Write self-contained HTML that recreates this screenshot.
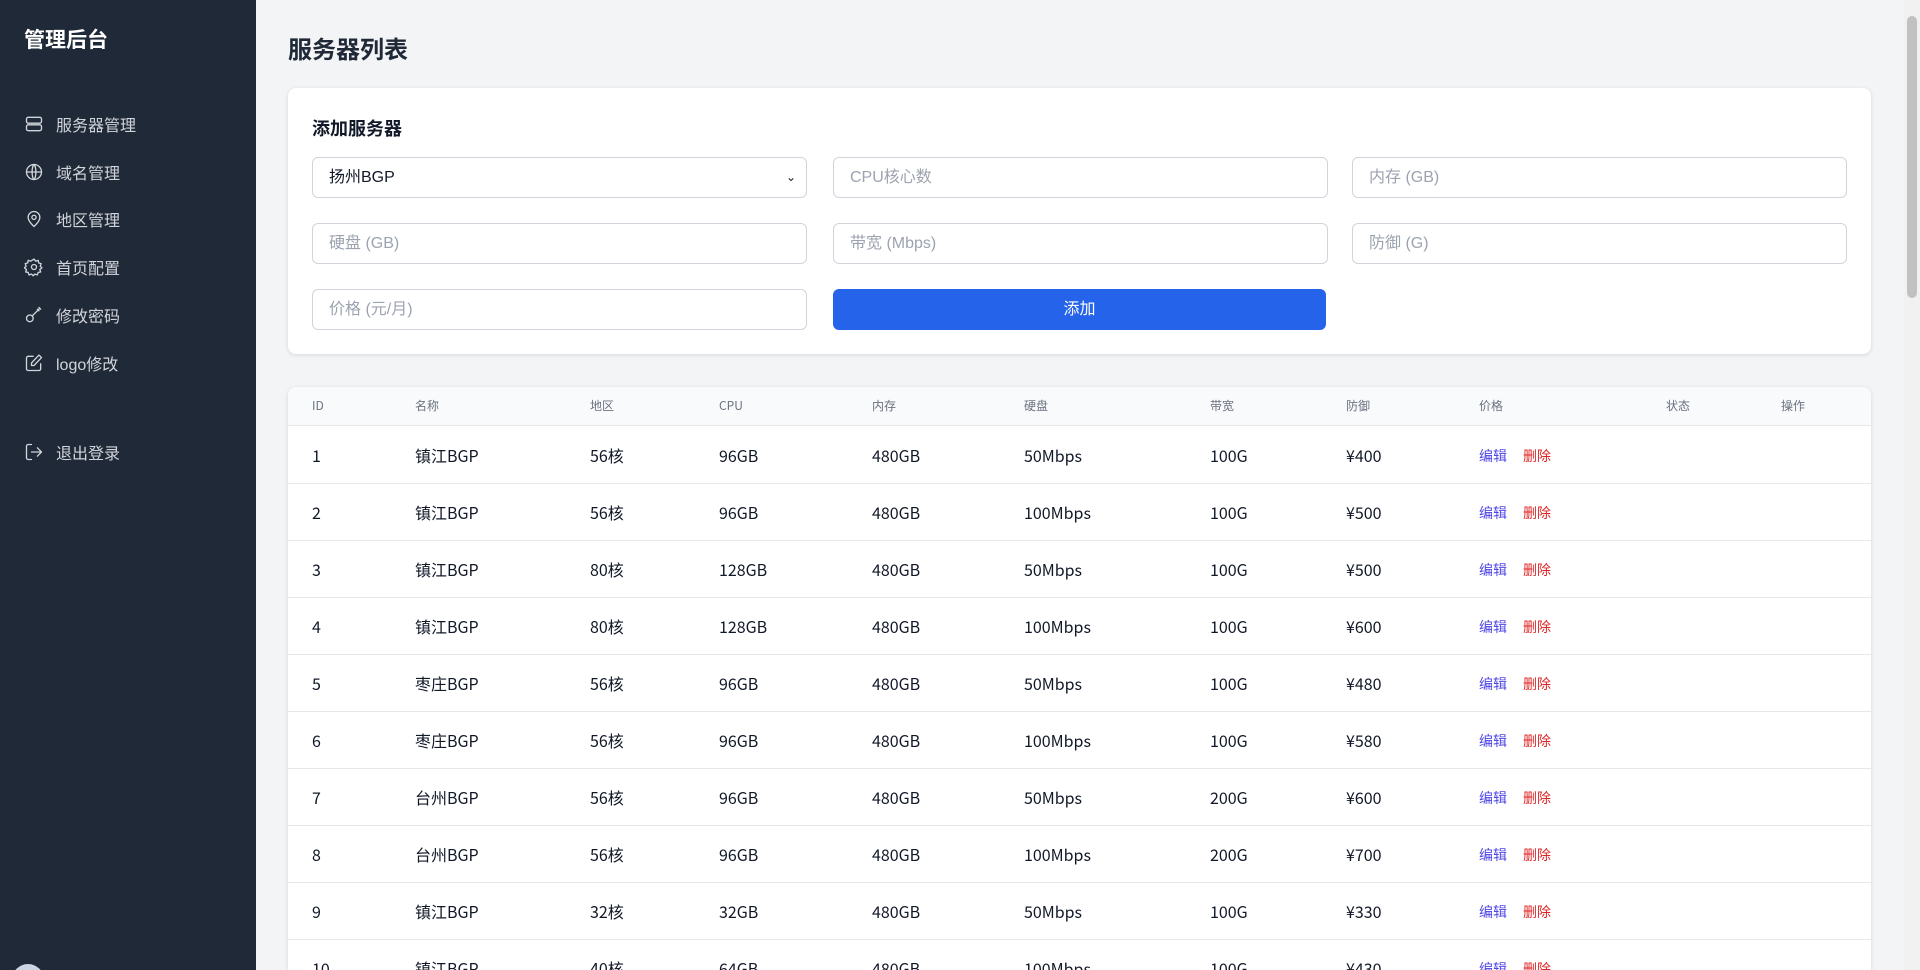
<!DOCTYPE html>
<html><head><meta charset="utf-8"><style>
*{box-sizing:border-box;margin:0;padding:0}
html,body{width:1920px;height:970px;overflow:hidden}
body{background:#f3f4f6;font-family:"Liberation Sans","Noto Sans CJK SC",sans-serif;color:#111827;position:relative}
.sb{position:absolute;left:0;top:0;width:256px;height:970px;background:#1f2937;color:#e5e7eb;overflow:hidden}
.sb h1{position:absolute;left:24px;top:24px;font-size:21px;color:#fff;font-weight:bold}
.nav{position:absolute;left:24px;height:24px;display:flex;align-items:center;font-size:16px;color:#d1d5db}
.nav svg{width:20px;height:20px;margin-right:12px;stroke:#d1d5db;fill:none;stroke-width:1.6;stroke-linecap:round;stroke-linejoin:round}
.main h2{position:absolute;left:288px;top:30px;font-size:24px;font-weight:bold;color:#1f2937}
.card{position:absolute;left:288px;width:1583px;background:#fff;border-radius:8px;box-shadow:0 1px 4px rgba(0,0,0,.12)}
.card h3{position:absolute;left:24px;top:27px;font-size:18px;font-weight:bold}
.in{position:absolute;width:495px;height:41px;border:1px solid #d1d5db;border-radius:6px;font-size:16px;color:#9ca3af;padding:0 16px;line-height:39px;background:#fff}
.btn{position:absolute;width:493px;height:41px;border-radius:6px;background:#2563eb;color:#fff;font-size:16px;text-align:center;line-height:41px}
.tb{font-family:"Noto Sans CJK SC","Liberation Sans",sans-serif}
.row{display:flex;align-items:center;padding-left:24px;border-top:1px solid #e5e7eb;height:57px;font-size:16px;color:#111827}
.hd{height:39px;background:#f9fafb;font-size:12px;color:#6b7280;border-top:none;border-bottom:1px solid #e5e7eb;border-radius:8px 8px 0 0}
.row span{flex:none;line-height:20px}
.c1{width:103px}.c2{width:175px}.c3{width:129px}.c4{width:153px}.c5{width:152px}.c6{width:186px}.c7{width:136px}.c8{width:133px}.c9{width:187px}.c10{width:115px}
.e{color:#4f46e5;font-size:14px;margin-right:16px}.d{color:#dc2626;font-size:14px}
.scroll{position:absolute;right:0;top:0;width:16px;height:970px;background:#f1f1f1}
.thumb{position:absolute;right:3px;top:16px;width:10px;height:282px;background:#c1c1c1;border-radius:5px}
</style></head><body>
<div class="sb">
<h1>管理后台</h1>
<div class="nav" style="top:112px"><svg viewBox="0 0 24 24"><rect x="3" y="4" width="18" height="7" rx="2"/><rect x="3" y="13" width="18" height="7" rx="2"/></svg>服务器管理</div>
<div class="nav" style="top:160px"><svg viewBox="0 0 24 24"><circle cx="12" cy="12" r="9"/><path d="M3 12h18M12 3c3 3 3 15 0 18M12 3c-3 3-3 15 0 18"/></svg>域名管理</div>
<div class="nav" style="top:207px"><svg viewBox="0 0 24 24"><path d="M12 21s-7-6-7-11a7 7 0 0 1 14 0c0 5-7 11-7 11z"/><circle cx="12" cy="10" r="2.5"/></svg>地区管理</div>
<div class="nav" style="top:255px"><svg viewBox="0 0 24 24"><circle cx="12" cy="12" r="3"/><path d="M12 2.5l2 2.5 3-1 .5 3 3 1-1 3 2 2-2.5 2 1 3-3 .5-1 3-3-1-2 2-2-2-3 1-1-3-3-.5 1-3-2.5-2 2-2-1-3 3-1 .5-3 3 1z"/></svg>首页配置</div>
<div class="nav" style="top:303px"><svg viewBox="0 0 24 24"><circle cx="7" cy="16" r="4"/><path d="M10 13l9-9M16 5l2 2M18 3l2 2"/></svg>修改密码</div>
<div class="nav" style="top:351px"><svg viewBox="0 0 24 24"><path d="M11 4H5a2 2 0 0 0-2 2v13a2 2 0 0 0 2 2h13a2 2 0 0 0 2-2v-6"/><path d="M18 2.5l3 3L12 15H9v-3z"/></svg>logo修改</div>
<div class="nav" style="top:440px"><svg viewBox="0 0 24 24"><path d="M9 21H5a2 2 0 0 1-2-2V5a2 2 0 0 1 2-2h4M16 17l5-5-5-5M21 12H9"/></svg>退出登录</div>
<div style="position:absolute;left:12px;top:964px;width:32px;height:32px;border-radius:50%;background:#cbd5e1"></div>
</div>
<div class="main">
<h2>服务器列表</h2>
<div class="card" style="top:88px;height:266px">
<h3>添加服务器</h3>
<div class="in" style="left:24px;top:69px;color:#111827">扬州BGP<span style="position:absolute;right:10px;font-size:12px">&#8964;</span></div>
<div class="in" style="left:545px;top:69px">CPU核心数</div>
<div class="in" style="left:1064px;top:69px">内存 (GB)</div>
<div class="in" style="left:24px;top:135px">硬盘 (GB)</div>
<div class="in" style="left:545px;top:135px">带宽 (Mbps)</div>
<div class="in" style="left:1064px;top:135px">防御 (G)</div>
<div class="in" style="left:24px;top:201px">价格 (元/月)</div>
<div class="btn" style="left:545px;top:201px">添加</div>
</div>
<div class="card tb" style="top:387px;height:583px;overflow:hidden;border-radius:8px 8px 0 0">
<div class="row hd"><span class="c1">ID</span><span class="c2">名称</span><span class="c3">地区</span><span class="c4">CPU</span><span class="c5">内存</span><span class="c6">硬盘</span><span class="c7">带宽</span><span class="c8">防御</span><span class="c9">价格</span><span class="c10">状态</span><span>操作</span></div>
<div class="row" style="border-top:none"><span class="c1">1</span><span class="c2">镇江BGP</span><span class="c3">56核</span><span class="c4">96GB</span><span class="c5">480GB</span><span class="c6">50Mbps</span><span class="c7">100G</span><span class="c8">¥400</span><span class="c9"><span class="e">编辑</span><span class="d">删除</span></span></div>
<div class="row"><span class="c1">2</span><span class="c2">镇江BGP</span><span class="c3">56核</span><span class="c4">96GB</span><span class="c5">480GB</span><span class="c6">100Mbps</span><span class="c7">100G</span><span class="c8">¥500</span><span class="c9"><span class="e">编辑</span><span class="d">删除</span></span></div>
<div class="row"><span class="c1">3</span><span class="c2">镇江BGP</span><span class="c3">80核</span><span class="c4">128GB</span><span class="c5">480GB</span><span class="c6">50Mbps</span><span class="c7">100G</span><span class="c8">¥500</span><span class="c9"><span class="e">编辑</span><span class="d">删除</span></span></div>
<div class="row"><span class="c1">4</span><span class="c2">镇江BGP</span><span class="c3">80核</span><span class="c4">128GB</span><span class="c5">480GB</span><span class="c6">100Mbps</span><span class="c7">100G</span><span class="c8">¥600</span><span class="c9"><span class="e">编辑</span><span class="d">删除</span></span></div>
<div class="row"><span class="c1">5</span><span class="c2">枣庄BGP</span><span class="c3">56核</span><span class="c4">96GB</span><span class="c5">480GB</span><span class="c6">50Mbps</span><span class="c7">100G</span><span class="c8">¥480</span><span class="c9"><span class="e">编辑</span><span class="d">删除</span></span></div>
<div class="row"><span class="c1">6</span><span class="c2">枣庄BGP</span><span class="c3">56核</span><span class="c4">96GB</span><span class="c5">480GB</span><span class="c6">100Mbps</span><span class="c7">100G</span><span class="c8">¥580</span><span class="c9"><span class="e">编辑</span><span class="d">删除</span></span></div>
<div class="row"><span class="c1">7</span><span class="c2">台州BGP</span><span class="c3">56核</span><span class="c4">96GB</span><span class="c5">480GB</span><span class="c6">50Mbps</span><span class="c7">200G</span><span class="c8">¥600</span><span class="c9"><span class="e">编辑</span><span class="d">删除</span></span></div>
<div class="row"><span class="c1">8</span><span class="c2">台州BGP</span><span class="c3">56核</span><span class="c4">96GB</span><span class="c5">480GB</span><span class="c6">100Mbps</span><span class="c7">200G</span><span class="c8">¥700</span><span class="c9"><span class="e">编辑</span><span class="d">删除</span></span></div>
<div class="row"><span class="c1">9</span><span class="c2">镇江BGP</span><span class="c3">32核</span><span class="c4">32GB</span><span class="c5">480GB</span><span class="c6">50Mbps</span><span class="c7">100G</span><span class="c8">¥330</span><span class="c9"><span class="e">编辑</span><span class="d">删除</span></span></div>
<div class="row"><span class="c1">10</span><span class="c2">镇江BGP</span><span class="c3">40核</span><span class="c4">64GB</span><span class="c5">480GB</span><span class="c6">100Mbps</span><span class="c7">100G</span><span class="c8">¥430</span><span class="c9"><span class="e">编辑</span><span class="d">删除</span></span></div>
</div>
</div>
<div class="scroll"><div class="thumb"></div></div>
</body></html>
